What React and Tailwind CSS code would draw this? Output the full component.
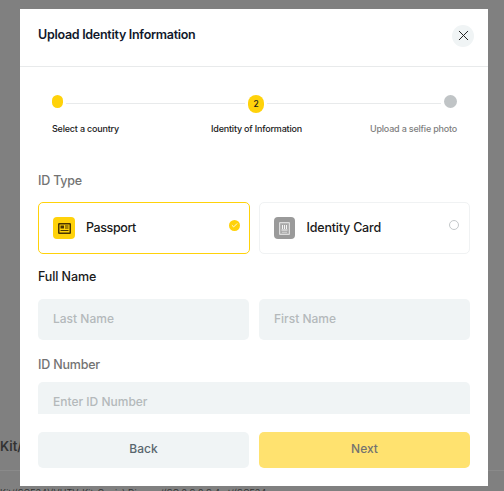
import { X, Check } from 'lucide-react';

const font = "font-['Inter','Liberation_Sans',sans-serif]";

function Step({ label, muted, className }) {
    return (
        <span className={`text-[9px] font-medium tracking-[-0.2px] whitespace-nowrap ${muted ? 'text-[#808080]' : 'text-[#1a1a1a]'} ${className}`}>
            {label}
        </span>
    );
}

function PassportIcon() {
    return (
        <div className="w-[22px] h-[22px] rounded-[4px] bg-[#ffd20a] flex items-center justify-center">
            <svg width="13" height="11" viewBox="0 0 13 11">
                <rect x="0.75" y="0.75" width="11.5" height="9.5" rx="0.5" fill="#ffd20a" stroke="#4a3500" strokeWidth="1.5" />
                <rect x="2.5" y="2.5" width="3.5" height="3" fill="#4a3500" />
                <path d="M7 3h3.5M7 5h3.5M2.5 7.5h8" stroke="#4a3500" strokeWidth="1" />
            </svg>
        </div>
    );
}

function CardIcon() {
    return (
        <div className="w-[21px] h-[22px] mr-px rounded-[4px] bg-[#9a9a9a] flex items-center justify-center">
            <svg width="11" height="13" viewBox="0 0 11 13">
                <rect x="0.6" y="0.6" width="9.8" height="11.8" rx="0.5" fill="#a8a8a8" stroke="#dddddd" strokeWidth="1.2" />
                <path d="M3.5 3v4M5.5 3v4M7.5 3v4M2.5 8h6" stroke="#f4f4f4" strokeWidth="1" />
                <path d="M3 10.3h5" stroke="#dddddd" strokeWidth="0.8" />
            </svg>
        </div>
    );
}

function TypeCard({ active, icon, label }) {
    return (
        <div className={`relative flex-1 h-[52px] rounded-[5px] border bg-white flex items-center pl-[14px] gap-[11px] ${active ? 'border-[#ffd20a]' : 'border-[#f0f2f3]'}`}>
            {icon}
            <span className={`text-[12.5px] font-medium text-[#1a1a1a] ${active ? 'tracking-[-0.4px]' : 'tracking-[-0.2px]'}`}>{label}</span>
            {active ? (
                <div className="absolute right-[9px] top-[17px] w-[11px] h-[11px] rounded-full bg-[#ffd20a] flex items-center justify-center">
                    <Check className="w-[7px] h-[7px] text-white" strokeWidth={3} />
                </div>
            ) : (
                <div className="absolute right-[10px] top-[17px] w-[10px] h-[10px] rounded-full border border-[#c4c8ca]"></div>
            )}
        </div>
    );
}

function Field({ placeholder, className }) {
    return (
        <div className={`bg-[#f0f4f5] rounded-[5px] pl-[15px] pb-[2px] flex items-center text-[12px] font-medium text-[#b4b9bb] ${className}`}>
            {placeholder}
        </div>
    );
}

export default function App() {
    return (
        <div className={`relative h-[491px] w-[504px] overflow-hidden bg-[#808080] pt-[9px] pl-[20px] ${font}`}>
            {/* page behind the overlay */}
            <span className="absolute left-0 top-[437px] text-[13px] font-semibold text-[#333333]">Kit/</span>
            <div className="absolute left-0 right-0 top-[470px] border-t border-[#8a8a8a]"></div>
            <span className="absolute left-0 top-[486px] text-[9px] text-[#333333] whitespace-nowrap">Kit/(SCE34)(VUTV-Kit-Copic) Dicover/(SC 2 S 2 S 4 at/(SCE34</span>

            <div className="relative w-[468px] h-[477px] bg-white flex flex-col">
                <div className="h-[58px] shrink-0 border-b border-[#e8eaeb] pl-[18px] pr-[14px] pb-[4px] flex items-center justify-between">
                    <h2 className="text-[12.5px] font-semibold text-[#10182b] tracking-[-0.28px]">Upload Identity Information</h2>
                    <button className="w-[22px] h-[22px] rounded-full bg-[#f0f4f5] flex items-center justify-center">
                        <X className="w-[17px] h-[17px] text-[#222222]" strokeWidth={1.4} />
                    </button>
                </div>

                <div className="h-[347px] shrink-0 overflow-hidden px-[18px]">
                    {/* stepper */}
                    <div className="flex items-center gap-[3px] pl-[14px] pr-[13px] mt-[28px] h-[18px]">
                        <div className="w-[11px] h-[13px] shrink-0 rounded-full bg-[#ffd20a] -mt-[5px]"></div>
                        <div className="w-[179px] shrink-0 h-px bg-[#e8eaeb] -mt-px"></div>
                        <div className="w-4 h-[18px] shrink-0 rounded-full bg-[#ffd20a] flex items-center justify-center text-[8.5px] font-medium text-[#1a1a1a]">2</div>
                        <div className="flex-1 h-px bg-[#e8eaeb] -mt-px"></div>
                        <div className="w-[13px] h-[13px] shrink-0 rounded-full bg-[#c0c4c6] -mt-[5px]"></div>
                    </div>
                    <div className="grid grid-cols-3 pl-[14px] pr-[13px] mt-[9px] leading-[14px]">
                        <Step label="Select a country" className="text-left" />
                        <Step label="Identity of Information" className="text-center ml-[4px]" />
                        <Step label="Upload a selfie photo" muted className="text-right" />
                    </div>

                    <div className="mt-[37px] text-[12.5px] font-medium tracking-[-0.2px] text-[#737373] leading-[16px]">ID Type</div>
                    <div className="flex gap-[9px] mt-[13px]">
                        <TypeCard active icon={<PassportIcon />} label="Passport" />
                        <TypeCard icon={<CardIcon />} label="Identity Card" />
                    </div>

                    <div className="mt-[15px] text-[12.5px] font-medium tracking-[-0.1px] text-[#1a1a1a] leading-[16px]">Full Name</div>
                    <div className="flex gap-[10px] mt-[14px]">
                        <Field placeholder="Last Name" className="flex-1 h-[41px]" />
                        <Field placeholder="First Name" className="flex-1 h-[41px]" />
                    </div>

                    <div className="mt-[17px] text-[12.5px] font-medium tracking-[-0.2px] text-[#737373] leading-[16px]">ID Number</div>
                    <Field placeholder="Enter ID Number" className="h-[41px] mt-[9px]" />
                </div>

                <div className="flex gap-[10px] px-[18px] mt-[18px]">
                    <button className="flex-1 h-[36px] pb-[2px] rounded-[5px] bg-[#f0f4f5] text-[12px] font-medium text-[#59666e]">Back</button>
                    <button className="flex-1 h-[36px] pb-[2px] rounded-[5px] bg-[#ffe26f] text-[12px] font-medium text-[#73736f]">Next</button>
                </div>
            </div>
        </div>
    );
}
